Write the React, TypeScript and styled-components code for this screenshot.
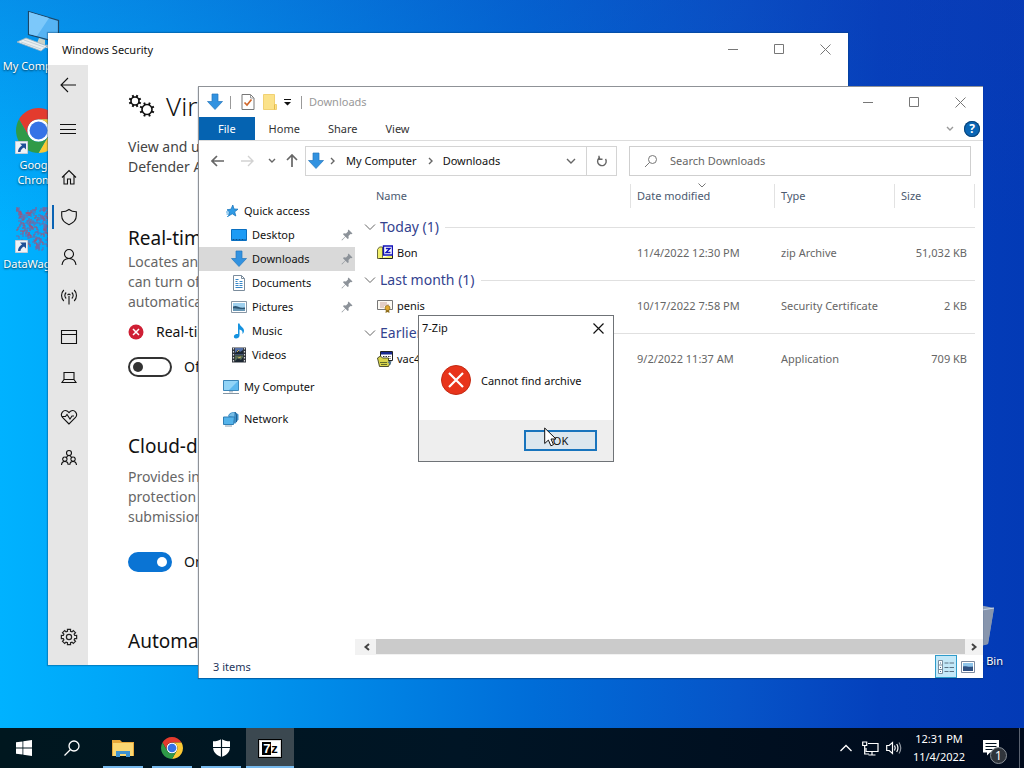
import React from "react";
import styled, { createGlobalStyle, css } from "styled-components";

const GlobalStyle = createGlobalStyle`
  *, *::before, *::after { box-sizing: border-box; }
  body {
    margin: 0;
    font-family: "Noto Sans", "Open Sans", sans-serif;
    font-size: 11px;
    line-height: 16px;
    color: #111;
  }
  h1, h2, p { margin: 0; font-weight: 400; }
  button, input { font: inherit; color: inherit; }
  button { border: 0; padding: 0; background: none; }
  svg { display: block; flex: none; }
`;

const Screen = styled.div`
  display: flex;
  flex-direction: column;
  height: 100vh;
  overflow: hidden;
`;

const Workspace = styled.main`
  position: relative;
  flex: 1;
  min-height: 0;
  overflow: hidden;
  background:
    linear-gradient(to bottom, rgba(20, 60, 180, 0.28), rgba(20, 60, 180, 0) 32%),
    linear-gradient(to right, #00b2ff 0%, #00a3f6 14%, #008ae8 32%, #006dd8 52%, #0654c8 72%, #0440bc 86%, #033ab6 100%);
`;

/* ---------- desktop shortcuts ---------- */

const Shortcuts = styled.div`
  display: flex;
  flex-direction: column;
  width: 76px;
  padding-top: 8px;
`;

const ShortcutItem = styled.button`
  display: flex;
  flex-direction: column;
  align-items: center;
  min-height: 99px;
  color: #fff;
  line-height: 15px;
  text-shadow: 0 1px 2px rgba(0, 0, 0, 0.7);
`;

const ShortcutArt = styled.span`
  position: relative;
  display: grid;
  align-items: start;
  height: 50px;
  padding-top: 1px;
`;

const ArrowBadge = styled.span`
  position: absolute;
  left: -1px;
  bottom: 3px;
`;

const BinSpot = styled.div`
  position: absolute;
  right: 12px;
  bottom: 26px;
  display: flex;
  width: 76px;
  justify-content: center;
`;

/* ---------- window chrome ---------- */

const WindowBase = styled.section`
  position: absolute;
  display: flex;
  flex-direction: column;
  overflow: hidden;
  background: #fff;
`;

const SecurityWindow = styled(WindowBase)`
  inset: 33px 176px 63px 48px;
  box-shadow: 0 0 1px 1px rgba(0, 60, 110, 0.35);
`;

const ExplorerWindow = styled(WindowBase)`
  inset: 86px 41px 50px 198px;
  border-top: 1px solid #8f9297;
  border-left: 1px solid #8f9297;
  box-shadow: 0 1px 1px rgba(0, 50, 110, 0.5);
`;

const DialogWindow = styled(WindowBase)`
  top: 315px;
  left: 418px;
  width: 196px;
  border: 1px solid #6f7377;
`;

const TitleBar = styled.header<{ $height: number }>`
  display: flex;
  flex: none;
  align-items: center;
  height: ${(p) => p.$height}px;
`;

const Caption = styled.span<{ $muted?: boolean }>`
  flex: 1;
  color: ${(p) => (p.$muted ? "#999" : "#111")};
`;

const CaptionButton = styled.button<{ $narrow?: boolean }>`
  display: grid;
  place-items: center;
  width: ${(p) => (p.$narrow ? 30 : 46)}px;
  height: 28px;
  color: ${(p) => (p.$narrow ? "#111" : "#777")};
`;

function WindowControls() {
  return (
    <>
      <CaptionButton aria-label="Minimize">
        <svg width="10" height="10" stroke="currentColor" fill="none"><path d="M0 5.5h10" /></svg>
      </CaptionButton>
      <CaptionButton aria-label="Maximize">
        <svg width="10" height="10" stroke="currentColor" fill="none"><path d="M.5.5h9v9h-9z" /></svg>
      </CaptionButton>
      <CaptionButton aria-label="Close">
        <svg width="11" height="11" stroke="currentColor" fill="none"><path d="M.5.5l10 10M10.5.5l-10 10" /></svg>
      </CaptionButton>
    </>
  );
}

/* ---------- security window ---------- */

const SecurityCaption = styled(Caption)`
  padding: 1px 0 0 14px;
`;

const SecurityBody = styled.div`
  display: flex;
  flex: 1;
  min-height: 0;
`;

const Rail = styled.nav`
  display: flex;
  flex: none;
  flex-direction: column;
  width: 40px;
  padding-bottom: 8px;
  background: #e6e6e6;
`;

const RailButton = styled.button<{ $gap?: number; $active?: boolean; $last?: boolean }>`
  display: grid;
  flex: none;
  place-items: center;
  height: 40px;
  padding-left: 2px;
  margin-top: ${(p) => (p.$last ? "auto" : `${p.$gap ?? 0}px`)};
  ${(p) => p.$active && css`
    background: linear-gradient(#0a63b4, #0a63b4) 4px 50% / 2px 24px no-repeat;
  `}
`;

const SecurityContent = styled.div`
  flex: 1;
  min-width: 0;
  padding: 26px 24px 0 40px;
  overflow: hidden;
  font-size: 14px;
  line-height: 20px;
  white-space: pre;
`;

const PageTitle = styled.h1`
  display: flex;
  gap: 10px;
  align-items: center;
  font-size: 26px;
  line-height: 30px;
  font-weight: 300;
`;

const Intro = styled.p`
  margin-top: 16px;
  color: #444;
`;

const SectionTitle = styled.h2<{ $gap: number }>`
  margin-top: ${(p) => p.$gap}px;
  font-size: 19px;
  line-height: 27px;
`;

const Description = styled.p<{ $gap?: number }>`
  margin-top: ${(p) => p.$gap ?? 0}px;
  color: #666;
`;

const Warning = styled.p`
  display: flex;
  gap: 12px;
  align-items: center;
  margin-top: 10px;
`;

const SwitchLabel = styled.label<{ $gap: number }>`
  display: flex;
  gap: 12px;
  align-items: center;
  height: 20px;
  margin-top: ${(p) => p.$gap}px;
`;

const Switch = styled.input`
  appearance: none;
  display: flex;
  align-items: center;
  width: 44px;
  height: 20px;
  margin: 0;
  padding: 0 3px;
  border: 2px solid #333;
  border-radius: 10px;
  background: #fff;
  &::after {
    content: "";
    width: 10px;
    height: 10px;
    border-radius: 50%;
    background: #333;
  }
  &:checked {
    justify-content: flex-end;
    border-color: #0a74d4;
    background: #0a74d4;
  }
  &:checked::after { background: #fff; }
`;

const railItems: { label: string; d: string; gap?: number; active?: boolean }[] = [
  { label: "Back", d: "M1 9h15M8 2L1 9l7 7" },
  { label: "Menu", d: "M0 4.500h16M0 9.500h16M0 13.500h16", gap: 4 },
  { label: "Home", d: "M2 9.5L9 2.5l7 7M4 8v8h3.500v-5h3v5h3.500V8", gap: 8 },
  { label: "Virus & threat protection", d: "M9 1.500c2 1.600 4.500 2.300 7.300 2.300v4c0 4-3 7.200-7.300 8.900C4.700 15 1.700 11.800 1.700 7.800v-4C4.500 3.800 7 3.100 9 1.500z", active: true },
  { label: "Account protection", d: "M9 1.500a4.500 4.500 0 1 1 0 9a4.500 4.500 0 1 1 0-9M2 17c.5-4 3.300-6.500 7-6.500s6.500 2.500 7 6.500" },
  { label: "Firewall & network protection", d: "M9 8v8.500M7.800 7.300a1.200 1.200 0 1 1 2.400 0M6.200 10.500c-1.800-1.700-1.800-4.300 0-6M11.800 10.500c1.800-1.700 1.800-4.300 0-6M3.800 13c-3-3-3-8 0-11M14.200 13c3-3 3-8 0-11" },
  { label: "App & browser control", d: "M1.500 2.500h15v13h-15zM1.500 6.500h15" },
  { label: "Device security", d: "M4 4.500h10v7H4zM4 11.500L2 14.500h14l-2-3" },
  { label: "Device performance & health", d: "M9 16L2.500 9.500C-.5 6 3.500.8 7.500 3.200L9 4.700l1.500-1.500c4-2.400 8 2.800 5 6.300zM2 8.500h3.500l1.500-2 3 4.500 2-3h2" },
  { label: "Family options", d: "M9 2.500a2.500 2.500 0 1 1 0 5a2.500 2.500 0 1 1 0-5M6.500 9.500c.5-1.300 1.400-2 2.500-2s2 .7 2.500 2M4.900 9a2.200 2.200 0 1 1-.1 0M13.100 9a2.200 2.200 0 1 1-.1 0M1.500 17c.2-2.300 1.500-3.600 3.400-3.600S8 14.700 8.300 17M9.700 17c.3-2.300 1.500-3.600 3.300-3.600s3.200 1.300 3.500 3.600" },
];

const gearOutline = (cx: number, cy: number, r: number) =>
  Array.from({ length: 8 }, (_, i) => {
    const a = (i * Math.PI) / 4;
    const p = (rad: number, off: number) =>
      `${(cx + rad * Math.cos(a + off)).toFixed(2)} ${(cy + rad * Math.sin(a + off)).toFixed(2)}`;
    return `${i ? "L" : "M"}${p(r * 0.76, -0.26)}L${p(r, -0.2)}L${p(r, 0.2)}L${p(r * 0.76, 0.26)}`;
  }).join("") + "Z";

const gearTeeth = (cx: number, cy: number, inner: number, outer: number) =>
  Array.from({ length: 8 }, (_, i) => {
    const a = (i * Math.PI) / 4 + 0.39;
    const x = Math.cos(a);
    const y = Math.sin(a);
    return `M${(cx + inner * x).toFixed(2)} ${(cy + inner * y).toFixed(2)}L${(cx + outer * x).toFixed(2)} ${(cy + outer * y).toFixed(2)}`;
  }).join("");

function SecurityApp() {
  return (
    <SecurityWindow aria-label="Windows Security">
      <TitleBar $height={32}>
        <SecurityCaption>Windows Security</SecurityCaption>
        <WindowControls />
      </TitleBar>
      <SecurityBody>
        <Rail>
          {railItems.map((item) => (
            <RailButton key={item.label} aria-label={item.label} $gap={item.gap} $active={item.active}>
              <svg width="18" height="18" viewBox="0 0 18 18" fill="none" stroke="#111" strokeWidth="1.1">
                <path d={item.d} />
              </svg>
            </RailButton>
          ))}
          <RailButton aria-label="Settings" $last>
            <svg width="18" height="18" viewBox="0 0 18 18" fill="none" stroke="#222" strokeWidth="1.2">
              <path d={gearOutline(9, 9, 7.800)} />
              <circle cx="9" cy="9" r="2.600" />
            </svg>
          </RailButton>
        </Rail>
        <SecurityContent>
          <PageTitle>
            <svg width="28" height="27" viewBox="0 0 28 27" fill="none" stroke="#111" strokeWidth="1.600">
              <circle cx="7" cy="8" r="4" />
              <path d={gearTeeth(7, 8, 4, 6.300)} strokeWidth="2" />
              <circle cx="19" cy="16.500" r="5" />
              <path d={gearTeeth(19, 16.500, 5, 7.500)} strokeWidth="2" />
            </svg>
            Virus
          </PageTitle>
          <Intro>{"View and update\nDefender Antivirus"}</Intro>
          <SectionTitle $gap={48}>Real-time</SectionTitle>
          <Description>{"Locates and\ncan turn off\nautomatically"}</Description>
          <Warning>
            <svg width="16" height="16" viewBox="0 0 16 16">
              <circle cx="8" cy="8" r="7.500" fill="#cf1f34" />
              <path d="M5 5l6 6M11 5l-6 6" stroke="#fff" strokeWidth="1.500" />
            </svg>
            Real-time
          </Warning>
          <SwitchLabel $gap={15}>
            <Switch type="checkbox" />
            Off
          </SwitchLabel>
          <SectionTitle $gap={56}>Cloud-delivered</SectionTitle>
          <Description $gap={7}>{"Provides increased\nprotection\nsubmission"}</Description>
          <SwitchLabel $gap={25}>
            <Switch type="checkbox" defaultChecked />
            On
          </SwitchLabel>
          <SectionTitle $gap={56}>Automatic</SectionTitle>
        </SecurityContent>
      </SecurityBody>
    </SecurityWindow>
  );
}

/* ---------- explorer ---------- */

const QuickTools = styled.div`
  display: flex;
  align-items: center;
  padding-left: 8px;
`;

const ToolButton = styled.button<{ $width: number }>`
  display: grid;
  place-items: center;
  width: ${(p) => p.$width}px;
  height: 24px;
`;

const ToolRule = styled.span`
  width: 1px;
  height: 13px;
  margin: 0 7px;
  background: #999;
`;

const RibbonTabs = styled.nav`
  display: flex;
  flex: none;
  align-items: center;
  height: 24px;
  border-bottom: 1px solid #dcdcdc;
`;

const RibbonTab = styled.button<{ $file?: boolean }>`
  height: 23px;
  padding: ${(p) => (p.$file ? "0 19px" : "0 14px")};
  color: ${(p) => (p.$file ? "#fff" : "#333")};
  background: ${(p) => (p.$file ? "#0563b1" : "transparent")};
`;

const RibbonEnd = styled.div`
  display: flex;
  gap: 10px;
  align-items: center;
  margin-left: auto;
  padding-right: 3px;
`;

const HelpButton = styled.button`
  width: 16px;
  height: 16px;
  border-radius: 50%;
  background: #0a66b5;
  box-shadow: inset 0 0 0 1px #0b4377;
  color: #fff;
  font-size: 12px;
  font-weight: 700;
`;

const NavBar = styled.div`
  display: flex;
  flex: none;
  align-items: center;
  height: 40px;
  padding: 0 12px 0 8px;
`;

const NavButton = styled.button<{ $width: number }>`
  display: grid;
  flex: none;
  place-items: center;
  width: ${(p) => p.$width}px;
  height: 28px;
`;

const AddressBar = styled.div`
  display: flex;
  flex: 1 1 312px;
  min-width: 0;
  align-items: center;
  height: 30px;
  border: 1px solid #d4d4d4;
`;

const Crumb = styled.button`
  margin: 0 8px;
`;

const AddressEnd = styled.div`
  display: flex;
  align-items: center;
  align-self: stretch;
  margin-left: auto;
`;

const RefreshButton = styled.button`
  display: grid;
  place-items: center;
  align-self: stretch;
  width: 30px;
  border-left: 1px solid #d4d4d4;
`;

const SearchBox = styled.label`
  display: flex;
  flex: 1 1 342px;
  min-width: 0;
  gap: 12px;
  align-items: center;
  height: 30px;
  margin-left: 12px;
  padding-left: 14px;
  border: 1px solid #cfcfcf;
`;

const SearchInput = styled.input`
  flex: 1;
  min-width: 0;
  padding: 0;
  border: 0;
  outline: 0;
  background: none;
  &::placeholder { color: #666; opacity: 1; }
`;

const ExplorerBody = styled.div`
  display: flex;
  flex: 1;
  min-height: 0;
`;

const Tree = styled.nav`
  display: flex;
  flex: none;
  flex-direction: column;
  width: 156px;
  padding-top: 18px;
`;

const TreeRow = styled.button<{ $nested?: boolean; $selected?: boolean; $gap?: boolean }>`
  display: flex;
  flex: none;
  gap: 5px;
  align-items: center;
  height: 24px;
  margin-top: ${(p) => (p.$gap ? 8 : 0)}px;
  padding-left: ${(p) => (p.$nested ? 32 : 24)}px;
  padding-right: 2px;
  text-align: left;
  background: ${(p) => (p.$selected ? "#d9d9d9" : "transparent")};
`;

const TreeName = styled.span`
  flex: 1;
`;

const FilePane = styled.div`
  display: flex;
  flex: 1;
  flex-direction: column;
  min-width: 0;
`;

const FileTable = styled.table`
  width: calc(100% - 8px);
  margin-top: 3px;
  border-collapse: separate;
  border-spacing: 0;
  table-layout: fixed;
`;

const ColumnHead = styled.th<{ $width?: number }>`
  position: relative;
  width: ${(p) => (p.$width ? `${p.$width}px` : "auto")};
  height: 24px;
  padding: 0 0 0 ${(p) => (p.$width ? 6 : 21)}px;
  border-right: 1px solid #e2e2e2;
  color: #4c5a70;
  font-weight: 400;
  text-align: left;
`;

const SortMark = styled.svg`
  position: absolute;
  top: -1px;
  left: 67px;
`;

const GroupHead = styled.th`
  height: 28px;
  padding: 0;
  color: #34438f;
  font-size: 14px;
  font-weight: 400;
`;

const FirstGap = styled.tr`
  height: 5px;
`;

const GroupButton = styled.button`
  display: flex;
  gap: 4px;
  align-items: center;
  width: 100%;
  padding-left: 9px;
  white-space: nowrap;
  &::after {
    content: "";
    flex: 1;
    height: 1px;
    margin-left: 2px;
    background: #e0e0e0;
  }
`;

const Cell = styled.td<{ $right?: boolean }>`
  height: 25px;
  padding: 0 8px 2px 6px;
  color: #666;
  text-align: ${(p) => (p.$right ? "right" : "left")};
`;

const FileCell = styled(Cell)`
  padding-left: 22px;
  color: #111;
`;

const FileName = styled.span`
  display: flex;
  gap: 4px;
  align-items: center;
`;

const ScrollTrack = styled.div`
  display: flex;
  height: 16px;
  margin-top: auto;
  padding-left: 3px;
  background: #f2f2f2;
`;

const ScrollArrow = styled.button`
  display: grid;
  place-items: center;
  width: 18px;
`;

const ScrollThumb = styled.div`
  flex: 1;
  height: 15px;
  background: #cbcbcb;
`;

const StatusBar = styled.footer`
  display: flex;
  flex: none;
  align-items: center;
  height: 23px;
  padding: 0 4px 0 14px;
  color: #24355c;
`;

const StatusText = styled.span`
  flex: 1;
`;

const ViewButton = styled.button<{ $active?: boolean }>`
  display: grid;
  place-items: center;
  width: 22px;
  height: 23px;
  border: ${(p) => (p.$active ? "1px solid #2f9ccb" : "0")};
  background: ${(p) => (p.$active ? "#c3e8f8" : "transparent")};
`;

const DownArrow = () => (
  <svg width="16" height="18" viewBox="0 0 16 18">
    <path d="M5 1h6v7.500h4.500L8 16.500.5 8.500H5z" fill="#3292e0" stroke="#2477bd" strokeWidth=".7" />
  </svg>
);

const Chevron = ({ d, w = 8, h = 8, color = "#666", sw = 1.4 }: { d: string; w?: number; h?: number; color?: string; sw?: number }) => (
  <svg width={w} height={h} viewBox={`0 0 ${w} ${h}`} fill="none" stroke={color} strokeWidth={sw}><path d={d} /></svg>
);

const PinIcon = () => (
  <svg width="12" height="12" viewBox="0 0 12 12">
    <path d="M7.500.5l4 4-1.200.7-.8-.2-2 2 .2 2.200-1 .8-2.200-2.200L1 11.500l-.5-.5 3.700-3.500L2 5.300l.8-1L5 4.500l2-2-.2-.8z" fill="#8c9299" />
  </svg>
);

const StarIcon = () => (
  <svg width="16" height="16" viewBox="0 0 16 16">
    <path d="M9.800 2l1.200 4 4 .2-3.300 2.600L12.800 13 9.300 10.800 5.500 13l1.200-4L4 6.800l4-.6z" fill="#2f9be6" stroke="#1b76bd" strokeWidth=".8" />
    <path d="M3 9h3M3.500 11h2.500M4 13.500h1.500" stroke="#3f9fe0" />
  </svg>
);

const DesktopIcon = () => (
  <svg width="16" height="16" viewBox="0 0 16 16">
    <path d="M.5 2.500h15v11H.5z" fill="#1d9bf5" stroke="#0a6fc0" />
    <path d="M1.500 12.500h13" stroke="#0b4f8c" strokeDasharray="2 1" />
  </svg>
);

const DocumentIcon = () => (
  <svg width="16" height="16" viewBox="0 0 16 16">
    <path d="M2.500.5h8l3 3v12h-11z" fill="#fff" stroke="#7b8c9c" />
    <path d="M4.500 4.500h3M4.500 6.500h2M8.500 6.500h3M4.500 8.500h3M8.500 8.500h3M4.500 10.500h3M8.500 10.500h3M4.500 12.500h7" stroke="#3787c8" strokeWidth="1.200" />
    <path d="M10.500.5v3h3" fill="none" stroke="#7b8c9c" />
  </svg>
);

const PictureIcon = () => (
  <svg width="16" height="16" viewBox="0 0 16 16">
    <path d="M.5 2.500h15v11H.5z" fill="#fff" stroke="#8796a5" />
    <path d="M2 4h12v8H2z" fill="#9fd0ee" />
    <path d="M2 7.500c4-2 5 2 12 1V12H2z" fill="#2d5674" />
    <path d="M2 9.500c3-1 6 1 12 .5V12H2z" fill="#6797b5" />
  </svg>
);

const MusicIcon = () => (
  <svg width="16" height="16" viewBox="0 0 16 16">
    <path d="M7 .5h1.500c.5 3 4.500 4 4.500 7 0 1.500-.5 2.500-1.500 3.500.5-3-1-4-3-4.500V12.500c0 2-1.800 3-3.500 3S2.500 14 3 12.700c.7-1.500 2.500-2 4-1.600z" fill="#1592df" />
  </svg>
);

const VideoIcon = () => (
  <svg width="16" height="16" viewBox="0 0 16 16">
    <path d="M1 .5h14v15H1z" fill="#30343a" />
    <path d="M4 1h8v6.500H4z" fill="#5571a8" />
    <path d="M4 8.500h8V15H4z" fill="#596e55" />
    <path d="M4 6l3-3 2 2 3-2v4H4zM4 14l3-3 3 2 2-3v5H4z" fill="#1c2733" />
    <path d="M6 5l2-2M7 11l3-1" stroke="#d0b35c" />
    <path d="M2.500 1v14M13.500 1v14" stroke="#d4d7da" strokeWidth="1.200" strokeDasharray="1.500 1.500" />
  </svg>
);

const ComputerIcon = () => (
  <svg width="16" height="16" viewBox="0 0 16 16">
    <path d="M.5 1.500h15v10H.5z" fill="#5cb8ee" stroke="#3c87b9" />
    <path d="M1 2h14L6 11H1z" fill="#92d4f7" />
    <path d="M6 12h4v1.500H6z" fill="#bbc6cf" />
    <path d="M0 14.500h16" stroke="#8495a3" />
  </svg>
);

const NetworkIcon = () => (
  <svg width="16" height="16" viewBox="0 0 16 16">
    <path d="M5 5c1-3 4-4.500 7-4l3.500 2.500v5L12 13z" fill="#3f8fc7" />
    <path d="M6 5c1-2.500 3-3.700 5.500-3.500L11 6z" fill="#77bde6" />
    <path d="M12 1l1.500 3v7" stroke="#205f91" fill="none" />
    <path d="M.5 6h11l-1 7.500H.5z" fill="#54b3ea" stroke="#2f7fb5" />
    <path d="M2 15h7" stroke="#8da0ae" />
  </svg>
);

const ArchiveIcon = () => (
  <svg width="16" height="16" viewBox="0 0 16 16">
    <path d="M.5 4.500l2-2.500h3v11.500h-5z" fill="#f2f06a" stroke="#6b6b3c" />
    <path d="M2.500 13.500h13V10" fill="#f2f06a" stroke="#222" />
    <path d="M6.500 1h9v9h-9z" fill="#fff" stroke="#1212b8" strokeWidth="1.400" />
    <path d="M8.800 3.500h4.200L9 7.500h4.500" fill="none" stroke="#1212b8" strokeWidth="1.400" />
  </svg>
);

const CertificateIcon = () => (
  <svg width="16" height="16" viewBox="0 0 16 16">
    <path d="M.5 2.500h15v9H.5z" fill="#fdfaf4" stroke="#777" />
    <path d="M3 5h7M3 7h9M3 9h4" stroke="#c9a39a" />
    <path d="M9 11l-.5 4 2-1 2 1-.5-4z" fill="#8d6d1d" />
    <circle cx="10.500" cy="10" r="2.500" fill="#e2a92f" stroke="#8d6d1d" strokeWidth=".7" />
  </svg>
);

const InstallerIcon = () => (
  <svg width="16" height="16" viewBox="0 0 16 16">
    <path d="M3.500.5h12v9h-12z" fill="#fff" stroke="#222" />
    <path d="M4 1h11v2.500H4z" fill="#17288f" />
    <path d="M6 5.500h8M6 7.500h8" stroke="#333" strokeDasharray="1.500 1" />
    <path d="M.5 7l3-2 2 2h6v3l2 1-2 4.500h-9z" fill="#d9d44c" stroke="#3c4022" strokeWidth=".9" />
    <path d="M3 11.500h7M4 13.500h6" stroke="#5f6a2b" />
    <path d="M10.500 11l4-1-1 4z" fill="#4f7391" />
  </svg>
);

const treeItems = [
  { name: "Quick access", Icon: StarIcon },
  { name: "Desktop", Icon: DesktopIcon, nested: true, pinned: true },
  { name: "Downloads", Icon: DownArrow, nested: true, pinned: true, selected: true },
  { name: "Documents", Icon: DocumentIcon, nested: true, pinned: true },
  { name: "Pictures", Icon: PictureIcon, nested: true, pinned: true },
  { name: "Music", Icon: MusicIcon, nested: true },
  { name: "Videos", Icon: VideoIcon, nested: true },
  { name: "My Computer", Icon: ComputerIcon, gap: true },
  { name: "Network", Icon: NetworkIcon, gap: true },
];

const fileGroups = [
  { title: "Today (1)", name: "Bon", Icon: ArchiveIcon, date: "11/4/2022 12:30 PM", type: "zip Archive", size: "51,032 KB" },
  { title: "Last month (1)", name: "penis", Icon: CertificateIcon, date: "10/17/2022 7:58 PM", type: "Security Certificate", size: "2 KB" },
  { title: "Earlier", name: "vac4", Icon: InstallerIcon, date: "9/2/2022 11:37 AM", type: "Application", size: "709 KB" },
];

function Explorer() {
  return (
    <ExplorerWindow aria-label="Downloads">
      <TitleBar $height={30}>
        <QuickTools>
          <DownArrow />
          <ToolRule />
          <ToolButton $width={20} aria-label="Properties">
            <svg width="14" height="16" viewBox="0 0 14 16" fill="none">
              <path d="M1 .5h8.500L13 4v11.500H1z" fill="#fff" stroke="#777" />
              <path d="M9.500.5V4H13" stroke="#999" />
              <path d="M3.500 8.500L6 11l4.500-5.500" stroke="#d0672b" strokeWidth="1.700" />
            </svg>
          </ToolButton>
          <ToolButton $width={24} aria-label="New folder">
            <svg width="14" height="16" viewBox="0 0 14 16">
              <path d="M.5.5h11v10h2v5H.5z" fill="#fbe28a" stroke="#edc95e" strokeWidth=".8" />
              <path d="M11.500 10.500v5" stroke="#e4b94a" />
            </svg>
          </ToolButton>
          <ToolButton $width={12} aria-label="Customize toolbar">
            <svg width="8" height="8" viewBox="0 0 8 8"><path d="M0 1h7v1H0zM0 4h7L3.500 7.500z" fill="#111" /></svg>
          </ToolButton>
          <ToolRule />
        </QuickTools>
        <Caption $muted>Downloads</Caption>
        <WindowControls />
      </TitleBar>
      <RibbonTabs>
        <RibbonTab $file>File</RibbonTab>
        <RibbonTab>Home</RibbonTab>
        <RibbonTab>Share</RibbonTab>
        <RibbonTab>View</RibbonTab>
        <RibbonEnd>
          <Chevron d="M1 2l3 3 3-3" color="#999" />
          <HelpButton>?</HelpButton>
        </RibbonEnd>
      </RibbonTabs>
      <NavBar>
        <NavButton $width={22} aria-label="Back">
          <Chevron w={14} h={12} d="M1 6h12M6 1L1 6l5 5" sw={1.7} />
        </NavButton>
        <NavButton $width={36} aria-label="Forward">
          <Chevron w={14} h={12} d="M1 6h12M8 1l5 5-5 5" color="#d2d2d2" />
        </NavButton>
        <NavButton $width={14} aria-label="Recent locations">
          <Chevron d="M1 2l3 3 3-3" />
        </NavButton>
        <NavButton $width={26} aria-label="Up">
          <Chevron w={12} h={14} d="M6 13V1M1 6l5-5 5 5" sw={1.7} />
        </NavButton>
        <AddressBar>
          <ToolButton $width={20} aria-label="Downloads folder"><DownArrow /></ToolButton>
          <Chevron w={12} d="M5 1l3 3-3 3" />
          <Crumb>My Computer</Crumb>
          <Chevron w={10} d="M4 1l3 3-3 3" />
          <Crumb>Downloads</Crumb>
          <AddressEnd>
            <ToolButton $width={30} aria-label="Previous locations"><Chevron w={10} d="M1 2l4 4 4-4" /></ToolButton>
            <RefreshButton aria-label="Refresh">
              <Chevron w={12} h={12} d="M4 2.500A4.300 4.300 0 1 0 9.500 4M3 .8v3.500h3.500" sw={1.4} />
            </RefreshButton>
          </AddressEnd>
        </AddressBar>
        <SearchBox>
          <svg width="14" height="14" viewBox="0 0 14 14" fill="none" stroke="#777">
            <circle cx="8.500" cy="5.500" r="4" />
            <path d="M5.700 8.300L1 13" />
          </svg>
          <SearchInput type="search" placeholder="Search Downloads" aria-label="Search Downloads" />
        </SearchBox>
      </NavBar>
      <ExplorerBody>
        <Tree>
          {treeItems.map(({ name, Icon, nested, pinned, selected, gap }) => (
            <TreeRow key={name} $nested={nested} $selected={selected} $gap={gap}>
              <Icon />
              <TreeName>{name}</TreeName>
              {pinned && <PinIcon />}
            </TreeRow>
          ))}
        </Tree>
        <FilePane>
          <FileTable>
            <thead>
              <tr>
                <ColumnHead>Name</ColumnHead>
                <ColumnHead $width={144}>
                  Date modified
                  <SortMark width="8" height="5" fill="none" stroke="#777"><path d="M.5.5L4 4 7.500.5" /></SortMark>
                </ColumnHead>
                <ColumnHead $width={120}>Type</ColumnHead>
                <ColumnHead $width={80}>Size</ColumnHead>
              </tr>
              <FirstGap />
            </thead>
            {fileGroups.map(({ title, name, Icon, date, type, size }) => (
              <tbody key={title}>
                <tr>
                  <GroupHead colSpan={4}>
                    <GroupButton>
                      <Chevron w={12} d="M1 1.500l5 5 5-5" sw={1} />
                      {title}
                    </GroupButton>
                  </GroupHead>
                </tr>
                <tr>
                  <FileCell><FileName><Icon />{name}</FileName></FileCell>
                  <Cell>{date}</Cell>
                  <Cell>{type}</Cell>
                  <Cell $right>{size}</Cell>
                </tr>
              </tbody>
            ))}
          </FileTable>
          <ScrollTrack>
            <ScrollArrow aria-label="Scroll left"><Chevron d="M6 1L2.500 4 6 7" color="#444" sw={2} /></ScrollArrow>
            <ScrollThumb />
            <ScrollArrow aria-label="Scroll right"><Chevron d="M2 1l3.500 3L2 7" color="#444" sw={2} /></ScrollArrow>
          </ScrollTrack>
        </FilePane>
      </ExplorerBody>
      <StatusBar>
        <StatusText>3 items</StatusText>
        <ViewButton aria-label="Details view" $active>
          <svg width="16" height="14" viewBox="0 0 16 14" fill="none" stroke="#5b7284">
            <path d="M.5.5h4v13h-4zM.5 5h4M.5 9.500h4" stroke="#7b8fa0" fill="#fff" />
            <path d="M2 3h1M2 7.500h1M2 11.500h1" stroke="#3b6a94" />
            <path d="M6.500 3h4M11.500 3H16M6.500 7.500h4M11.500 7.500H16M6.500 11.500h4M11.500 11.500H16" />
          </svg>
        </ViewButton>
        <ViewButton aria-label="Large icons view">
          <svg width="14" height="12" viewBox="0 0 14 12">
            <path d="M.5.5h13v11H.5z" fill="#fff" stroke="#7d8ba0" />
            <path d="M2 2h10v8H2z" fill="#8ec4ea" />
            <path d="M2 5.500c3-1 5 1 10 0V10H2z" fill="#2e4f80" />
          </svg>
        </ViewButton>
      </StatusBar>
    </ExplorerWindow>
  );
}

/* ---------- dialog ---------- */

const DialogCaption = styled(Caption)`
  padding-left: 3px;
`;

const DialogMessage = styled.div`
  display: flex;
  gap: 10px;
  align-items: center;
  height: 80px;
  padding-left: 22px;
`;

const DialogText = styled.p`
  padding-top: 2px;
`;

const DialogFooter = styled.footer`
  display: flex;
  justify-content: flex-end;
  height: 41px;
  padding: 10px 16px;
  background: #eeeeee;
`;

const OkButton = styled.button`
  width: 73px;
  height: 21px;
  border: 2px solid #1874bd;
  background: #dce7ee;
  line-height: 17px;
`;

const Pointer = styled.svg`
  position: absolute;
  top: 427px;
  left: 544px;
`;

function ErrorDialog() {
  return (
    <DialogWindow role="dialog" aria-label="7-Zip">
      <TitleBar $height={24}>
        <DialogCaption>7-Zip</DialogCaption>
        <CaptionButton $narrow aria-label="Close">
          <svg width="11" height="11" stroke="currentColor" fill="none" strokeWidth="1.200"><path d="M.5.5l10 10M10.500.5l-10 10" /></svg>
        </CaptionButton>
      </TitleBar>
      <DialogMessage>
        <svg width="30" height="30" viewBox="0 0 30 30">
          <circle cx="15" cy="15" r="14.500" fill="#e8341b" stroke="#c32a14" />
          <path d="M8 8l14 14M22 8L8 22" stroke="#fff" strokeWidth="2.200" />
        </svg>
        <DialogText>Cannot find archive</DialogText>
      </DialogMessage>
      <DialogFooter>
        <OkButton>OK</OkButton>
      </DialogFooter>
    </DialogWindow>
  );
}

/* ---------- taskbar ---------- */

const Taskbar = styled.footer`
  display: flex;
  flex: none;
  height: 40px;
  background: linear-gradient(to right, #00171f, #001525 45%, #000a1c);
  color: #fff;
`;

const TaskButton = styled.button<{ $state?: "open" | "active" }>`
  display: grid;
  place-items: center;
  width: 48px;
  ${(p) => p.$state === "open" && css`
    background: linear-gradient(#76b9ed, #76b9ed) 50% 100% / 40px 2px no-repeat;
  `}
  ${(p) => p.$state === "active" && css`
    background: #3b4850;
    border-bottom: 2px solid #76b9ed;
    padding-top: 2px;
  `}
`;

const OpenApps = styled.div`
  display: flex;
  gap: 1px;
  padding-left: 3px;
`;

const SevenZipBadge = styled.span`
  display: flex;
  align-items: center;
  justify-content: center;
  width: 24px;
  height: 19px;
  border: 1px solid #000;
  outline: 1px solid #d8d8d8;
  outline-offset: -2px;
  background: #fff;
  color: #000;
  font: 700 13px/13px "Liberation Sans", sans-serif;
`;

const SevenMark = styled.b`
  padding: 0 1px;
  background: #000;
  color: #fff;
`;

const Tray = styled.div`
  display: flex;
  align-items: center;
  margin-left: auto;
  padding-right: 4px;
`;

const TrayButton = styled.button<{ $width: number; $end?: number }>`
  position: relative;
  display: grid;
  place-items: center;
  width: ${(p) => p.$width}px;
  height: 40px;
  padding-right: ${(p) => p.$end ?? 0}px;
`;

const Clock = styled.button`
  width: 66px;
  line-height: 18px;
`;

const CountBadge = styled.span`
  position: absolute;
  right: 12px;
  bottom: 4px;
  width: 17px;
  height: 17px;
  border: 1px solid #8a9199;
  border-radius: 50%;
  background: #30353c;
  font-size: 12px;
  line-height: 15px;
`;

const ShowDesktop = styled.button`
  height: 40px;
  border-left: 1px solid #5a6270;
`;

const ChromeLogo = ({ size }: { size: number }) => (
  <svg width={size} height={size} viewBox="0 0 48 48">
    <circle cx="24" cy="24" r="12" fill="#fff" />
    <path d="M24 12h20.780a24 24 0 0 0-41.560 0L13.610 30A12 12 0 0 1 24 12z" fill="#e33b2e" />
    <path d="M34.390 30L24 48a24 24 0 0 0 20.780-36H24A12 12 0 0 1 34.390 30z" fill="#fcc934" />
    <path d="M13.610 30L3.220 12A24 24 0 0 0 24 48l10.390-18a12 12 0 0 1-20.780 0z" fill="#2f9a48" />
    <circle cx="24" cy="24" r="9.500" fill="#3573e6" />
  </svg>
);

function ShortcutBadge() {
  return (
    <ArrowBadge>
      <svg width="13" height="13" viewBox="0 0 13 13">
        <path d="M.5.500h12v12H.5z" fill="#eef2f7" stroke="#c4ccd6" />
        <path d="M5 2.500h6v6L9 6.500C7 7.500 5.500 9 5.500 11H3C3 8 4.500 6 7 4.500z" fill="#1e4f96" />
      </svg>
    </ArrowBadge>
  );
}

const speckles = Array.from({ length: 170 }, (_, i) => ({
  x: (i * 29 + ((i * i) % 13)) % 41,
  y: (i * 17 + ((i * i) % 19)) % 41,
  color: i % 3 ? "#6f6aa8" : "#b44a68",
}));

function DesktopShortcuts() {
  return (
    <>
      <Shortcuts>
        <ShortcutItem>
          <ShortcutArt>
            <svg width="46" height="46" viewBox="0 0 46 46">
              <path d="M13.500 2.500l30 9v22l-30-8z" fill="#56b3f3" stroke="#1d4666" strokeWidth="1.200" />
              <path d="M14 3l20 6-12 18-8-2z" fill="#7cc8fa" />
              <path d="M24 29l6 2v5l-8-2z" fill="#c9d2c8" />
              <path d="M18 33l12 3 8-1-4 5z" fill="#dfe5e2" />
              <path d="M2 33l9-4 21 8-6 5z" fill="#e9eef0" stroke="#9db2bf" strokeWidth=".8" />
              <path d="M6 33l20 7M9 31l20 7" stroke="#b6c6cf" strokeWidth=".7" />
            </svg>
          </ShortcutArt>
          My Computer
        </ShortcutItem>
        <ShortcutItem>
          <ShortcutArt>
            <ChromeLogo size={45} />
            <ShortcutBadge />
          </ShortcutArt>
          Google<br />Chrome
        </ShortcutItem>
        <ShortcutItem>
          <ShortcutArt>
            <svg width="45" height="45" viewBox="0 0 45 45" fill="none">
              {speckles.map((s, i) => (
                <path key={i} d={i % 2 ? `M${s.x} ${s.y + 1}h3v3` : `M${s.x + 1} ${s.y}v3h-2`} stroke={s.color} />
              ))}
            </svg>
            <ShortcutBadge />
          </ShortcutArt>
          DataWagon…
        </ShortcutItem>
      </Shortcuts>
      <BinSpot>
        <ShortcutItem>
          <ShortcutArt>
            <svg width="40" height="44" viewBox="0 0 40 44">
              <path d="M0 4l20-4 20 4-6 36-14 4-14-4z" fill="#93a3ba" />
              <path d="M22 6l18-2-6 36-12 3z" fill="#8795ad" />
              <path d="M1 4l21 3 18-3" stroke="#c7d6e8" fill="none" />
            </svg>
          </ShortcutArt>
          Recycle Bin
        </ShortcutItem>
      </BinSpot>
    </>
  );
}

export default function App() {
  return (
    <Screen>
      <GlobalStyle />
      <Workspace>
        <DesktopShortcuts />
        <SecurityApp />
        <Explorer />
        <ErrorDialog />
        <Pointer width="13" height="20" viewBox="0 0 13 20">
          <path d="M.7 1v15.500l3.700-3.400 2.500 5.700 2.600-1.200L7 12h5z" fill="#fff" stroke="#111" />
        </Pointer>
      </Workspace>
      <Taskbar>
        <TaskButton aria-label="Start">
          <svg width="16" height="16" viewBox="0 0 16 16" fill="#fff">
            <path d="M0 2.300l6.500-.9v6.200H0zM7.300 1.300L16 0v7.600H7.300zM0 8.400h6.500v6.200L0 13.700zM7.300 8.400H16V16l-8.700-1.300z" />
          </svg>
        </TaskButton>
        <TaskButton aria-label="Search">
          <svg width="16" height="16" viewBox="0 0 16 16" fill="none" stroke="#fff" strokeWidth="1.300">
            <circle cx="10" cy="6" r="5" />
            <path d="M6.500 9.500L.5 15.500" />
          </svg>
        </TaskButton>
        <OpenApps>
          <TaskButton aria-label="File Explorer" $state="open">
            <svg width="22" height="19" viewBox="0 0 22 19">
              <path d="M0 1h8l2 2h12v14H0z" fill="#e8a93a" />
              <path d="M1 4h20v13H1z" fill="#fbd872" />
              <path d="M4 18v-6h14v6h-4v-3H8v3z" fill="#3f93d0" />
            </svg>
          </TaskButton>
          <TaskButton aria-label="Google Chrome" $state="open"><ChromeLogo size={22} /></TaskButton>
          <TaskButton aria-label="Windows Security" $state="open">
            <svg width="17" height="18" viewBox="0 0 17 18">
              <path d="M8.500 0c2.500 1.700 5 2.300 8.500 2.300V8c0 5-3.500 8.300-8.500 10C3.500 16.300 0 13 0 8V2.300C3.500 2.300 6 1.700 8.500 0z" fill="#fff" />
              <path d="M8.500 0v18M0 8.500h17" stroke="#001420" strokeWidth="1.200" />
            </svg>
          </TaskButton>
          <TaskButton aria-label="7-Zip" $state="active">
            <SevenZipBadge><SevenMark>7</SevenMark>z</SevenZipBadge>
          </TaskButton>
        </OpenApps>
        <Tray>
          <TrayButton $width={24} aria-label="Show hidden icons">
            <svg width="12" height="8" viewBox="0 0 12 8" fill="none" stroke="#fff" strokeWidth="1.300"><path d="M.5 7L6 1.500 11.500 7" /></svg>
          </TrayButton>
          <TrayButton $width={24} aria-label="Network">
            <svg width="17" height="15" viewBox="0 0 17 15" fill="none" stroke="#fff" strokeWidth="1.200">
              <path d="M6 2.500h10v8H4V7M10 10.500V14M6.500 14h7" />
              <path d="M.7 1h4v3.500h-4zM2.700 4.500V13H7" />
            </svg>
          </TrayButton>
          <TrayButton $width={24} aria-label="Volume">
            <svg width="16" height="14" viewBox="0 0 16 14" fill="none" stroke="#fff" strokeWidth="1.200">
              <path d="M.7 4.500h2.500L6.500 1.500v11L3.200 9.500H.7z" />
              <path d="M8.500 4.500q1.500 2.500 0 5M10.700 3q2.500 4 0 8" />
              <path d="M13 1.500q3.500 5.500 0 11" stroke="#8e959e" />
            </svg>
          </TrayButton>
          <Clock>12:31 PM<br />11/4/2022</Clock>
          <TrayButton $width={47} $end={9} aria-label="Notifications">
            <svg width="16" height="16" viewBox="0 0 16 16">
              <path d="M0 0h16v12.500H7L4 15.500v-3H0z" fill="#fff" />
              <path d="M2.500 3.500h11M2.500 6.500h11M2.500 9.500h7" stroke="#00101f" />
            </svg>
            <CountBadge>1</CountBadge>
          </TrayButton>
          <ShowDesktop aria-label="Show desktop" />
        </Tray>
      </Taskbar>
    </Screen>
  );
}
